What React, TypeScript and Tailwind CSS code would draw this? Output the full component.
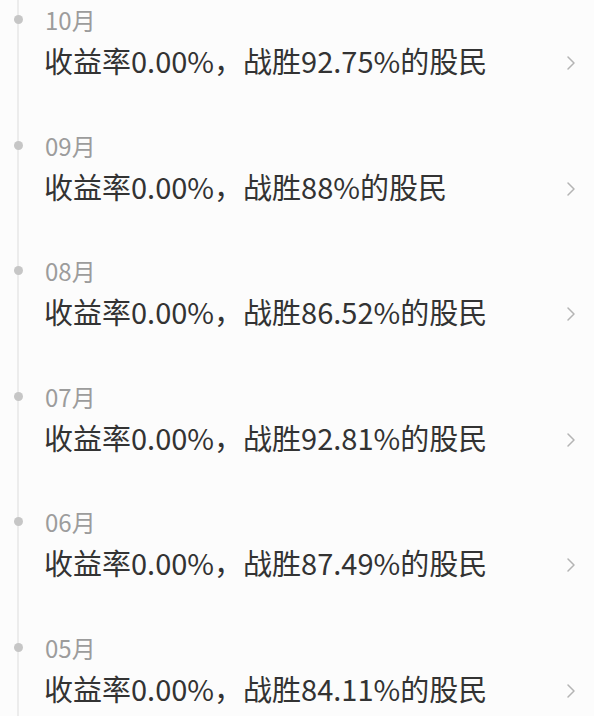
const records = [
  { month: '10月', rank: '92.75%' },
  { month: '09月', rank: '88%' },
  { month: '08月', rank: '86.52%' },
  { month: '07月', rank: '92.81%' },
  { month: '06月', rank: '87.49%' },
  { month: '05月', rank: '84.11%' },
];

function Chevron() {
  return (
    <svg className="mt-[6px]" width="12" height="18" viewBox="0 0 12 18" fill="none">
      <polyline points="3,3 9,9 3,15" stroke="#b4b4b4" strokeWidth="1.5" strokeLinejoin="round" strokeLinecap="round" />
    </svg>
  );
}

export default function App() {
  return (
    <div
      className="w-[594px] h-[716px] overflow-hidden bg-[#fcfcfc]"
      style={{ fontFamily: '"Noto Sans CJK SC", "Noto Sans", sans-serif' }}
    >
      {records.map((r) => (
        <div key={r.month} className="flex h-[125.6px]">
          {/* timeline rail */}
          <div className="relative w-[36px] flex justify-center">
            <div className="w-[2px] h-full bg-[#ececec]" />
            <div className="absolute top-[15px] left-[13.5px] w-[9px] h-[9px] rounded-full bg-[#c6c6c6]" />
          </div>
          <div className="flex-1 pt-[6px] pr-[17px]">
            <div className="pl-[9px] text-[24px] leading-[28px] text-[#9c9c9c]">{r.month}</div>
            <div className="mt-[6px] flex items-center justify-between pl-[8px]">
              <span className="text-[29px] leading-[40px] text-[#333333]">
                收益率0.00%，战胜{r.rank}的股民
              </span>
              <Chevron />
            </div>
          </div>
        </div>
      ))}
    </div>
  );
}
